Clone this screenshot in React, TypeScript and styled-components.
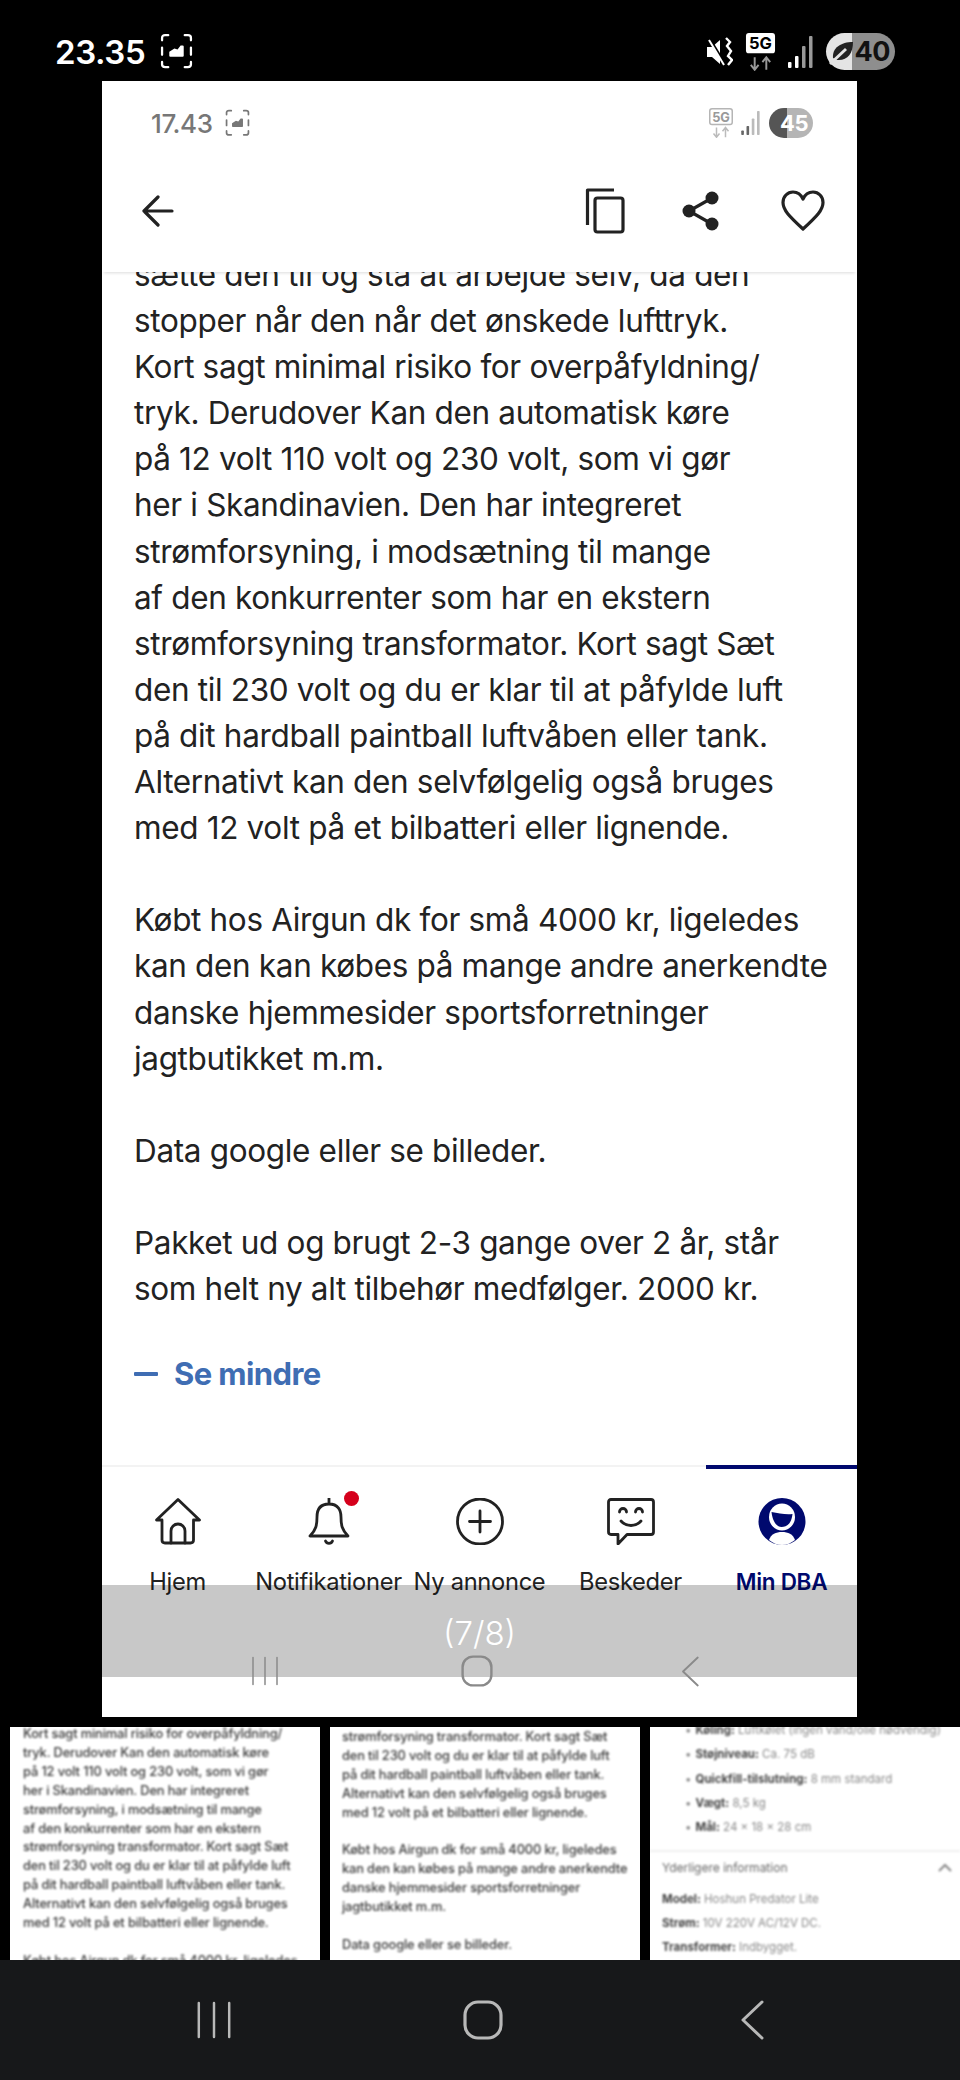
import React from "react";
import styled, { createGlobalStyle } from "styled-components";

const Global = createGlobalStyle`
  html, body { margin: 0; padding: 0; background: #000; }
  #root { width: 960px; height: 2080px; overflow: hidden; }
  * { box-sizing: border-box; }
`;

const Page = styled.div`
  width: 960px; height: 2080px; background: #000; display: flex; flex-direction: column;
  font-family: Inter, "Liberation Sans", sans-serif;
`;
const OuterStatus = styled.div`
  height: 81px; flex: none; display: flex; align-items: center; justify-content: space-between;
  padding: 22px 65px 0 55px; color: #fff;
`;
const StatusGroup = styled.div<{ $gap?: number }>`
  display: flex; align-items: center; gap: ${p => p.$gap ?? 12}px;
`;
const OuterTime = styled.span`
  font-size: 33px; font-weight: 600; letter-spacing: -0.4px; line-height: 40px;
`;
const Pill = styled.div<{ $w: number; $h: number; $a: string; $b: string; $split: number; $color: string; $size: number }>`
  width: ${p => p.$w}px; height: ${p => p.$h}px; border-radius: ${p => p.$h / 2}px;
  background: linear-gradient(90deg, ${p => p.$a} ${p => p.$split}%, ${p => p.$b} ${p => p.$split}%);
  color: ${p => p.$color}; font-size: ${p => p.$size}px; font-weight: 700; letter-spacing: -0.5px;
  display: flex; align-items: center; justify-content: flex-end; padding-right: 5px; position: relative;
`;
const Panel = styled.div`
  width: 755px; height: 1636px; margin-left: 102px; flex: none; background: #fff; position: relative;
  display: flex; flex-direction: column; overflow: hidden; color: #222;
`;
const InnerStatus = styled.div`
  height: 84px; flex: none; display: flex; align-items: center; justify-content: space-between;
  padding: 0 44px 0 49px; color: #777;
`;
const InnerTime = styled.span`
  font-size: 26px; font-weight: 500; letter-spacing: -0.4px;
`;
const Header = styled.div`
  height: 107px; flex: none; display: flex; align-items: center; justify-content: space-between;
  padding: 0 32px 16px 39px; background: #fff; position: relative; z-index: 1;
  box-shadow: 0 3px 3px -2px rgba(0,0,0,.14);
`;
const HeaderActions = styled.div`
  display: flex; align-items: center;
`;
const ActionSlot = styled.div<{ $w: number }>`
  width: ${p => p.$w}px; display: flex;
`;
const Content = styled.div`
  flex: 1; min-height: 0; overflow: hidden; padding: 0 32px;
`;
const Body = styled.div`
  margin-top: -20px; font-size: 31.5px; line-height: 46.1px; color: #222; letter-spacing: -0.34px; white-space: nowrap;
`;
const Line = styled.div`
  min-height: 46.1px;
`;
const ThumbLine = styled.div`
  min-height: 18.9px;
`;
const More = styled.div`
  display: flex; align-items: center; gap: 16px; margin-top: 39px; color: #3f6db3;
  font-size: 31px; font-weight: 700; letter-spacing: -0.6px; line-height: 46px;
`;
const MoreDash = styled.span`
  width: 24px; height: 4px; background: #3f6db3; border-radius: 1px;
`;
const Nav = styled.nav`
  height: 252px; flex: none; display: grid; grid-template-columns: repeat(5, 151px);
  border-top: 2px solid #f3f3f3;
`;
const NavItem = styled.div<{ $active?: boolean }>`
  position: relative; display: flex; flex-direction: column; align-items: center; padding-top: 31px;
  color: ${p => (p.$active ? "#00096e" : "#222")};
  ${p => p.$active && `&::before { content: ""; position: absolute; left: 0; right: 0; top: -2px; height: 4px; background: #00096e; }`}
`;
const NavLabel = styled.span<{ $active?: boolean }>`
  margin-top: 22px; font-size: ${p => (p.$active ? 22.5 : 23.7)}px; line-height: 30px; letter-spacing: -0.3px; white-space: nowrap;
  font-weight: ${p => (p.$active ? 600 : 400)};
`;
const Dot = styled.span`
  position: absolute; width: 15px; height: 15px; border-radius: 50%; background: #d5001c;
  left: 91px; top: 24px;
`;
const ViewerBand = styled.div`
  position: absolute; left: 0; right: 0; top: 1504px; height: 92px; background: rgba(0,0,0,.215);
  display: flex; justify-content: center; pointer-events: none;
`;
const Counter = styled.span`
  margin-top: 30px; color: #fff; font-size: 33px; line-height: 36px; font-weight: 300; height: 36px;
`;
const GhostNav = styled.div`
  position: absolute; left: 0; right: 0; top: 1566px; height: 48px; color: #8a8a8a; pointer-events: none;
`;
const GhostSlot = styled.div<{ $x: number }>`
  position: absolute; left: ${p => p.$x}px; top: 0; height: 48px; display: flex; align-items: center;
`;
const Thumbs = styled.div`
  flex: none; height: 233px; margin-top: 10px; padding-left: 10px; display: grid;
  grid-template-columns: 310px 310px 310px; gap: 10px;
`;
const Thumb = styled.div`
  background: #fff; overflow: hidden; position: relative;
`;
const ThumbText = styled.div<{ $top: number; $left: number }>`
  margin: ${p => p.$top}px 0 0 ${p => p.$left}px; font-size: 12.85px; line-height: 18.9px; color: #3a3a3a;
  white-space: nowrap; filter: blur(1.15px); letter-spacing: -.13px; font-weight: 500;
`;
const SpecList = styled.div`
  margin: -9px 0 0 35px; font-size: 11.5px; line-height: 24.3px; color: #888; white-space: nowrap; filter: blur(1.2px);
`;
const SpecRow = styled.div`
  &::before { content: "•"; margin-right: 4px; }
`;
const Key = styled.b`
  color: #444; font-weight: 700;
`;
const SpecRule = styled.div`
  height: 2px; background: #f0f0f0; margin-top: 11px; filter: blur(.8px);
`;
const SpecTitle = styled.div`
  display: flex; justify-content: space-between; align-items: center; height: 28px; margin-top: 1px;
  padding: 0 8px 0 12px; font-size: 12px; color: #666; filter: blur(1.2px); white-space: nowrap;
`;
const SpecDetails = styled.div`
  margin: 6px 0 0 12px; font-size: 11.5px; line-height: 24px; color: #888; white-space: nowrap; filter: blur(1.2px);
`;
const BottomBar = styled.div`
  flex: 1; background: #17181a; position: relative; color: #b8b8b8;
`;
const BarSlot = styled.div<{ $x: number }>`
  position: absolute; left: ${p => p.$x}px; top: 0; height: 100%; display: flex; align-items: center;
`;

const Capture = ({ size, color }: { size: number; color: string }) => (
  <svg width={size} height={size * 1.1} viewBox="0 0 32 35" fill="none" stroke={color} strokeWidth="2.2" strokeLinecap="round">
    <path d="M2 7V4.500Q2 2 5 2h3M24 2h3q3 0 3 2.500V7M2 14v7M30 14v7M2 28v2.500Q2 33 5 33h3M24 33h3q3 0 3-2.500V28" />
    <path d="M10 12h12q1 0 1 1v9q0 1-1 1H10q-1 0-1-1v-4l5-3 3 1 3-4z" fill={color} stroke="none" />
  </svg>
);

const FiveG = ({ h, color, sub, text, line }: { h: number; color: string; sub: string; text: string; line?: string }) => (
  <svg width={h} height={h * 1.25} viewBox="0 0 32 40">
    <rect x="1" y="1" width="30" height="21" rx="3" fill={color} stroke={line ?? "none"} strokeWidth="2" />
    <text x="16" y="18" textAnchor="middle" fontFamily="Inter, sans-serif" fontSize="17" fontWeight="700" fill={text}>5G</text>
    <path d="M10 26v13M6 34l4 5 4-5M22 39V26M18 31l4-5 4 5" fill="none" stroke={sub} strokeWidth="2" />
  </svg>
);

const Signal = ({ w, h, color, dim }: { w: number; h: number; color: string; dim: string }) => (
  <svg width={w} height={h} viewBox="0 0 26 32">
    <rect x="0" y="26" width="3.5" height="6" rx="1" fill={color} />
    <rect x="7" y="20" width="3.5" height="12" rx="1" fill={color} />
    <rect x="14" y="10" width="3.5" height="22" rx="1" fill={dim} />
    <rect x="21" y="0" width="3.5" height="32" rx="1" fill={dim} />
  </svg>
);

const Mute = () => (
  <svg width="27" height="32" viewBox="0 0 27 32" fill="#fff">
    <path d="M1 11h5l8-7v24l-8-7H1z" />
    <path d="M3 2l17 28" stroke="#000" strokeWidth="3" />
    <path d="M3 4l15 25" stroke="#fff" strokeWidth="2" />
    <path d="M20 2l4 4-3 4 4 5-3 5 4 4-4 5" fill="none" stroke="#fff" strokeWidth="2.400" />
  </svg>
);

const Leaf = () => (
  <svg width="28" height="28" viewBox="0 0 28 28" style={{ position: "absolute", left: 3, top: 5 }}>
    <path d="M4 20C3 10 12 4 24 4c0 12-6 19-16 18z" fill="#222" />
    <path d="M1 26L17 11" stroke="#e4e4e4" strokeWidth="3" />
  </svg>
);

const Arrow = () => (
  <svg width="33" height="32" viewBox="0 0 33 32" fill="none" stroke="#222" strokeWidth="3.200" strokeLinecap="round" strokeLinejoin="round">
    <path d="M31 16H3M17 2L3 16l14 14" />
  </svg>
);
const Copy = () => (
  <svg width="40" height="46" viewBox="0 0 40 46" fill="none" stroke="#222" strokeWidth="3.200" strokeLinejoin="round">
    <path d="M29 2H2.500v35" />
    <rect x="10" y="10" width="28" height="34" rx="2.500" />
  </svg>
);
const Share = () => (
  <svg width="38" height="40" viewBox="0 0 38 40" fill="#222">
    <circle cx="30" cy="7" r="6.500" /><circle cx="7" cy="20" r="6.500" /><circle cx="30" cy="33" r="6.500" />
    <path d="M30 7L7 20l23 13" fill="none" stroke="#222" strokeWidth="3.200" />
  </svg>
);
const Heart = () => (
  <svg width="44" height="42" viewBox="0 0 44 42" fill="none" stroke="#222" strokeWidth="3.200" strokeLinejoin="round">
    <path d="M22 39C8 26 2 20 2 12.500 2 6.500 6.500 2 12 2c4.200 0 8 2.500 10 7 2-4.500 5.800-7 10-7 5.500 0 10 4.500 10 10.500C42 20 36 26 22 39z" />
  </svg>
);
const Home = () => (
  <svg width="46" height="47" viewBox="0 0 46 47" fill="none" stroke="#222" strokeWidth="2.800" strokeLinejoin="round" strokeLinecap="round">
    <path d="M1.500 22L23 1.500 44.500 22 38.500 22V42q0 3-3 3H10q-3 0-3-3V22z" />
    <path d="M16 45V33a7 7 0 0 1 14 0v12" />
  </svg>
);
const Bell = () => (
  <svg width="46" height="47" viewBox="0 0 46 47" fill="none" stroke="#222" strokeWidth="2.800" strokeLinejoin="round" strokeLinecap="round">
    <path d="M23 0v6M23 6c-9 0-12 6-12 13 0 8-1 13-7 19h38c-6-6-7-11-7-19 0-7-3-13-12-13z" />
    <path d="M19.500 43a3.800 3.800 0 0 0 7 0" />
  </svg>
);
const Plus = () => (
  <svg width="48" height="47" viewBox="0 0 48 47" fill="none" stroke="#222" strokeWidth="2.800" strokeLinecap="round">
    <circle cx="24" cy="23.500" r="22.500" />
    <path d="M24 13v21M13.500 23.500h21" />
  </svg>
);
const Chat = () => (
  <svg width="48" height="47" viewBox="0 0 48 47" fill="none" stroke="#222" strokeWidth="2.800" strokeLinejoin="round" strokeLinecap="round">
    <path d="M4 1.500h40q2.500 0 2.500 2.500v30q0 2.500-2.500 2.500H20L11 46v-9.500H4q-2.500 0-2.500-2.500V4Q1.500 1.500 4 1.500z" />
    <path d="M12.500 14a3.500 3.500 0 0 1 7 0M28.500 14a3.500 3.500 0 0 1 7 0M14 23c5 6 15 6 20 0" />
  </svg>
);
const Profile = () => (
  <svg width="48" height="47" viewBox="0 0 48 47">
    <circle cx="24" cy="23.500" r="23.500" fill="#00096e" />
    <ellipse cx="24" cy="19" rx="13" ry="13.500" fill="#fff" />
    <path d="M13.500 14c7 1 14 3 21 2-1 9-5 13-11 13-5 0-9-6-10-15z" fill="#00096e" />
    <path d="M11 42c2-6 7-8 13-8s11 2 13 8c-4 3-8 5-13 5s-9-2-13-5z" fill="#fff" />
  </svg>
);
const BackChevron = ({ w, h, sw }: { w: number; h: number; sw: number }) => (
  <svg width={w} height={h} viewBox="0 0 24 40" fill="none" stroke="currentColor" strokeWidth={sw} strokeLinecap="round" strokeLinejoin="round">
    <path d="M22 2L3 20l19 18" />
  </svg>
);
const Recents = ({ w, h, sw }: { w: number; h: number; sw: number }) => (
  <svg width={w} height={h} viewBox="0 0 36 40" fill="none" stroke="currentColor" strokeWidth={sw} strokeLinecap="round">
    <path d="M2 2v36M18 2v36M34 2v36" />
  </svg>
);
const HomeBtn = ({ w, h, sw }: { w: number; h: number; sw: number }) => (
  <svg width={w} height={h} viewBox="0 0 40 40" fill="none" stroke="currentColor" strokeWidth={sw}>
    <rect x="2" y="2" width="36" height="36" rx="13" />
  </svg>
);
const SmallChevronUp = () => (
  <svg width="14" height="9" viewBox="0 0 14 9" fill="none" stroke="#888" strokeWidth="2">
    <path d="M1 8l6-6 6 6" />
  </svg>
);

const paragraphs: string[] = [
  "sætte den til og stå at arbejde selv, da den",
  "stopper når den når det ønskede lufttryk.",
  "Kort sagt minimal risiko for overpåfyldning/",
  "tryk. Derudover Kan den automatisk køre",
  "på 12 volt 110 volt og 230 volt, som vi gør",
  "her i Skandinavien. Den har integreret",
  "strømforsyning, i modsætning til mange",
  "af den konkurrenter som har en ekstern",
  "strømforsyning transformator. Kort sagt Sæt",
  "den til 230 volt og du er klar til at påfylde luft",
  "på dit hardball paintball luftvåben eller tank.",
  "Alternativt kan den selvfølgelig også bruges",
  "med 12 volt på et bilbatteri eller lignende.",
  "",
  "Købt hos Airgun dk for små 4000 kr, ligeledes",
  "kan den kan købes på mange andre anerkendte",
  "danske hjemmesider sportsforretninger",
  "jagtbutikket m.m.",
  "",
  "Data google eller se billeder.",
  "",
  "Pakket ud og brugt 2-3 gange over 2 år, står",
  "som helt ny alt tilbehør medfølger. 2000 kr.",
];

const navItems = [
  { label: "Hjem", icon: <Home /> },
  { label: "Notifikationer", icon: <Bell />, dot: true },
  { label: "Ny annonce", icon: <Plus /> },
  { label: "Beskeder", icon: <Chat /> },
  { label: "Min DBA", icon: <Profile />, active: true },
];

const specs: [string, string][] = [
  ["Køling:", " Luftkølet (ingen vand/olie nødvendig)"],
  ["Støjniveau:", " Ca. 75 dB"],
  ["Quickfill-tilslutning:", " 8 mm standard"],
  ["Vægt:", " 8,5 kg"],
  ["Mål:", " 24 x 18 x 28 cm"],
];
const details: [string, string][] = [
  ["Model:", " Hoshun Predator Lite"],
  ["Strøm:", " 10V 220V AC/12V DC."],
  ["Transformer:", " Indbygget."],
];

export default function App() {
  return (
    <Page>
      <Global />
      <OuterStatus>
        <StatusGroup $gap={15}>
          <OuterTime>23.35</OuterTime>
          <Capture size={33} color="#fff" />
        </StatusGroup>
        <StatusGroup $gap={12}>
          <Mute />
          <FiveG h={31} color="#fff" sub="#999" text="#000" />
          <Signal w={26} h={32} color="#fff" dim="#999" />
          <Pill $w={69} $h={37} $a="#e4e4e4" $b="#8e8e8e" $split={38} $color="#111" $size={27}>
            <Leaf />40
          </Pill>
        </StatusGroup>
      </OuterStatus>
      <Panel>
        <InnerStatus>
          <StatusGroup $gap={12}>
            <InnerTime>17.43</InnerTime>
            <Capture size={25} color="#777" />
          </StatusGroup>
          <StatusGroup $gap={8}>
            <FiveG h={24} color="#fff" sub="#bbb" text="#999" line="#b5b5b5" />
            <Signal w={20} h={24} color="#666" dim="#bbb" />
            <Pill $w={44} $h={30} $a="#555" $b="#b5b5b5" $split={42} $color="#fff" $size={22}>45</Pill>
          </StatusGroup>
        </InnerStatus>
        <Header>
          <Arrow />
          <HeaderActions>
            <ActionSlot $w={97}><Copy /></ActionSlot>
            <ActionSlot $w={99}><Share /></ActionSlot>
            <ActionSlot $w={44}><Heart /></ActionSlot>
          </HeaderActions>
        </Header>
        <Content>
          <Body>
            {paragraphs.map((t, i) => (
              <Line key={i}>{t}</Line>
            ))}
          </Body>
          <More>
            <MoreDash />
            Se mindre
          </More>
        </Content>
        <Nav>
          {navItems.map(n => (
            <NavItem key={n.label} $active={n.active}>
              {n.icon}
              {n.dot && <Dot />}
              <NavLabel $active={n.active}>{n.label}</NavLabel>
            </NavItem>
          ))}
        </Nav>
        <ViewerBand>
          <Counter>(7/8)</Counter>
        </ViewerBand>
        <GhostNav>
          <GhostSlot $x={148}><Recents w={30} h={30} sw={2} /></GhostSlot>
          <GhostSlot $x={359}><HomeBtn w={32} h={32} sw={3} /></GhostSlot>
          <GhostSlot $x={578}><BackChevron w={20} h={31} sw={2.400} /></GhostSlot>
        </GhostNav>
      </Panel>
      <Thumbs>
        <Thumb>
          <ThumbText $top={-2} $left={13}>
            {paragraphs.slice(2, 15).map((t, i) => (
              <ThumbLine key={i}>{t}</ThumbLine>
            ))}
          </ThumbText>
        </Thumb>
        <Thumb>
          <ThumbText $top={1} $left={12}>
            {paragraphs.slice(8, 20).map((t, i) => (
              <ThumbLine key={i}>{t}</ThumbLine>
            ))}
          </ThumbText>
        </Thumb>
        <Thumb>
          <SpecList>
            {specs.map(([k, v]) => (
              <SpecRow key={k}><Key>{k}</Key>{v}</SpecRow>
            ))}
          </SpecList>
          <SpecRule />
          <SpecTitle>
            Yderligere information
            <SmallChevronUp />
          </SpecTitle>
          <SpecDetails>
            {details.map(([k, v]) => (
              <div key={k}><Key>{k}</Key>{v}</div>
            ))}
          </SpecDetails>
        </Thumb>
      </Thumbs>
      <BottomBar>
        <BarSlot $x={196}><Recents w={36} h={38} sw={2.600} /></BarSlot>
        <BarSlot $x={463}><HomeBtn w={40} h={42} sw={3.200} /></BarSlot>
        <BarSlot $x={740}><BackChevron w={24} h={40} sw={3} /></BarSlot>
      </BottomBar>
    </Page>
  );
}
